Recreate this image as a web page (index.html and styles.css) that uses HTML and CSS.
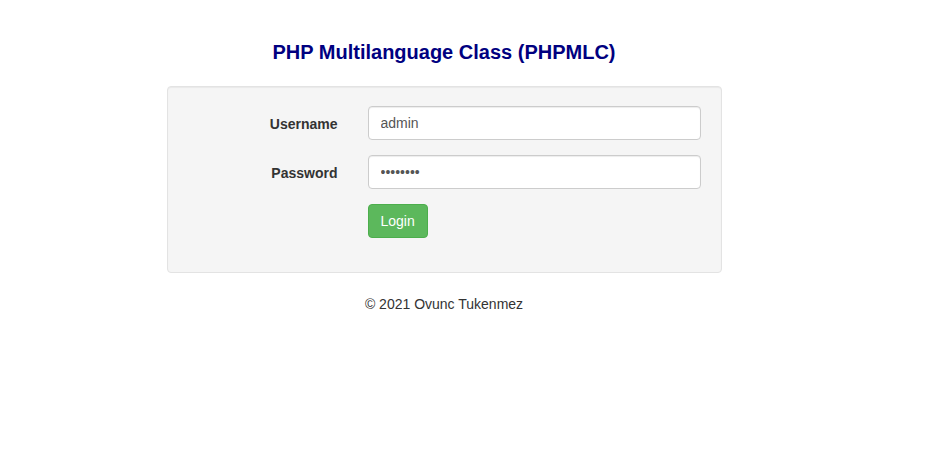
FILE: index.html
```html
<!DOCTYPE html>
<html lang="en">
<head>
    <meta charset="UTF-8">
    <meta name="viewport" content="width=device-width, initial-scale=1.0">
    <title>PHP Multilanguage Class (PHPMLC)</title>
    <link rel="stylesheet" href="styles.css">
</head>
<body>
    <div class="page">
        <h1 class="title">PHP Multilanguage Class (PHPMLC)</h1>

        <!-- Login form -->
        <form class="well" action="#" method="post">
            <div class="form-group">
                <label class="form-label" for="username">Username</label>
                <div class="form-field">
                    <input class="form-control" type="text" id="username" name="username" value="admin">
                </div>
            </div>
            <div class="form-group">
                <label class="form-label" for="password">Password</label>
                <div class="form-field">
                    <input class="form-control" type="password" id="password" name="password" value="password">
                </div>
            </div>
            <div class="form-group">
                <div class="form-label"></div>
                <div class="form-field">
                    <button class="btn-login" type="submit">Login</button>
                </div>
            </div>
        </form>

        <p class="footer">&copy; 2021 Ovunc Tukenmez</p>
    </div>
</body>
</html>
```

FILE: styles.css
```css
body {
    font-family: 'Liberation Sans', Arial, sans-serif;
    font-size: 14px;
    line-height: 20px;
    color: #333;
    background-color: #fff;
    margin: 0;
}

.page {
    width: 888px;
    padding-top: 38px;
}

.title {
    color: #000080;
    font-size: 20px;
    font-weight: bold;
    text-align: center;
    line-height: 28px;
    margin: 0 0 20px;
}

/* Caja del formulario */
.well {
    width: 515px;
    margin: 0 auto;
    padding: 19px;
    background-color: #f5f5f5;
    border: 1px solid #e3e3e3;
    border-radius: 4px;
    box-shadow: inset 0 1px 1px rgba(0, 0, 0, 0.05);
}

.form-group {
    display: flex;
    align-items: flex-start;
    margin: 0 -15px 15px;
}

.form-label {
    width: 151px;
    padding: 8px 15px 0;
    text-align: right;
    font-weight: bold;
    flex-shrink: 0;
}

.form-field {
    flex: 1;
    padding: 0 16px 0 15px;
}

.form-control {
    display: block;
    width: 100%;
    height: 34px;
    box-sizing: border-box;
    padding: 6px 12px;
    font-family: inherit;
    font-size: 14px;
    color: #555;
    background-color: #fff;
    border: 1px solid #ccc;
    border-radius: 4px;
    box-shadow: inset 0 1px 1px rgba(0, 0, 0, 0.075);
}

.form-control:focus {
    border-color: #66afe9;
    outline: none;
}

.btn-login {
    height: 34px;
    padding: 6px 12px;
    font-family: inherit;
    font-size: 14px;
    color: #fff;
    background-color: #5cb85c;
    border: 1px solid #4cae4c;
    border-radius: 4px;
    cursor: pointer;
}

.btn-login:hover {
    background-color: #449d44;
}

.footer {
    text-align: center;
    margin: 21px 0 0;
}
```
